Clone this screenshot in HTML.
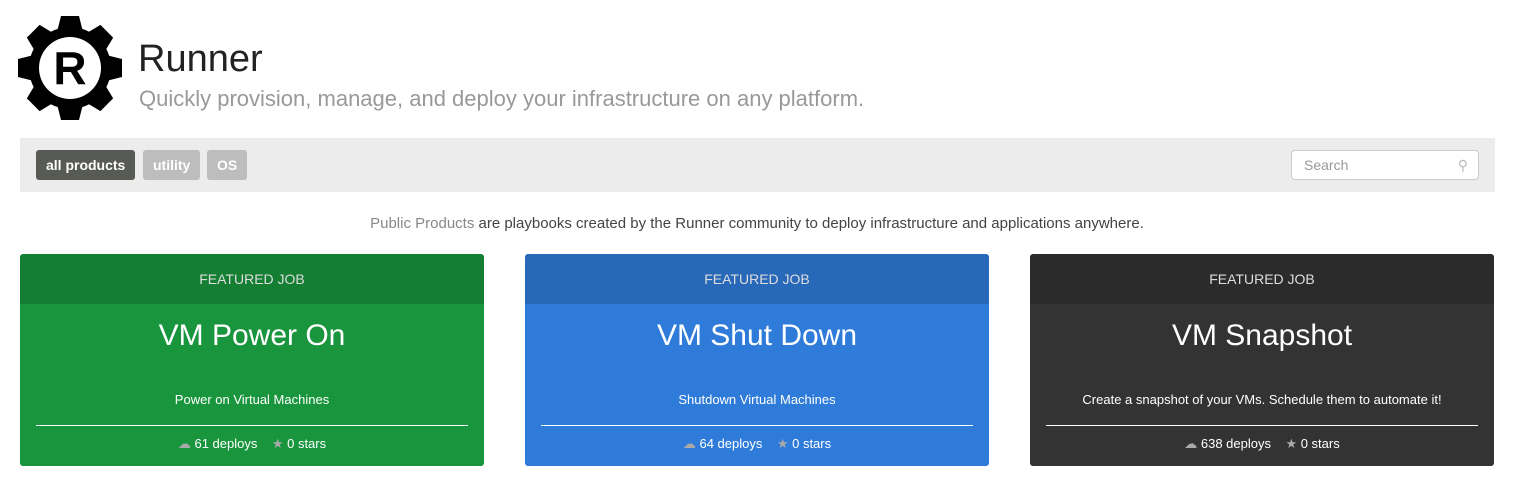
<!DOCTYPE html>
<html><head><style>
body{margin:0;background:#fff;font-family:"Liberation Sans",sans-serif;width:1514px;height:478px;position:relative;overflow:hidden}
.abs{position:absolute}
h1{position:absolute;left:138px;top:38px;margin:0;font-weight:normal;font-size:38px;color:#222}
.sub{left:139px;top:86px;font-size:22px;color:#999}
.bar{left:20px;top:138px;width:1475px;height:54px;background:#ececec}
.btn{position:absolute;top:12px;height:30px;line-height:30px;border-radius:3px;color:#fff;font-weight:bold;font-size:14px;padding:0 10px;background:#bdbdbd}
.search{position:absolute;left:1271px;top:12px;border:1px solid #ccc;border-radius:4px;background:#fff;font-size:14px;color:#999;line-height:28px;padding-left:12px;box-sizing:border-box;width:188px;height:30px}
.info{left:0;width:1514px;top:215px;text-align:center;font-size:15px;color:#444}
.card{position:absolute;top:254px;width:464px;height:212px;border-radius:3px;overflow:hidden;color:#fff;text-align:center}
.hd{height:50px;line-height:50px;font-size:14px;color:#ddd;background:rgba(0,0,0,.15)}
.t{position:absolute;top:65px;width:100%;font-size:30px}
.d{position:absolute;top:138px;width:100%;font-size:13px}
.ln{position:absolute;top:171px;left:16px;right:16px;border-top:1px solid #fff}
.f{position:absolute;top:182px;width:100%;font-size:13px}
.f span{color:#aaa}
</style></head><body>
<svg class="abs" style="left:18px;top:16px" width="104" height="104" viewBox="-52 -52 104 104">
<g fill="#000">
<circle r="41"/>
<g id="t"><path d="M-9,-52 L9,-52 L13,-36 L-13,-36 Z"/></g>
<use href="#t" transform="rotate(45)"/><use href="#t" transform="rotate(90)"/><use href="#t" transform="rotate(135)"/><use href="#t" transform="rotate(180)"/><use href="#t" transform="rotate(225)"/><use href="#t" transform="rotate(270)"/><use href="#t" transform="rotate(315)"/>
</g>
<circle r="31" fill="#fff"/>
<text x="0" y="16" text-anchor="middle" font-family="Liberation Sans" font-weight="bold" font-size="46">R</text>
</svg>
<h1>Runner</h1>
<div class="abs sub">Quickly provision, manage, and deploy your infrastructure on any platform.</div>
<div class="abs bar">
<div class="btn" style="left:16px;background:#575a55">all products</div>
<div class="btn" style="left:123px">utility</div>
<div class="btn" style="left:187px">OS</div>
<div class="search">Search<span style="position:absolute;right:10px;color:#bbb">&#9906;</span></div>
</div>
<div class="abs info"><span style="color:#888">Public Products</span> are playbooks created by the Runner community to deploy infrastructure and applications anywhere.</div>
<div class="card" style="left:20px;background:#18953d"><div class="hd">FEATURED JOB</div><div class="t">VM Power On</div><div class="d">Power on Virtual Machines</div><div class="ln"></div><div class="f"><span>☁</span> 61 deploys &nbsp;&nbsp; <span>★</span> 0 stars</div></div>
<div class="card" style="left:525px;background:#2f7bd9"><div class="hd">FEATURED JOB</div><div class="t">VM Shut Down</div><div class="d">Shutdown Virtual Machines</div><div class="ln"></div><div class="f"><span>☁</span> 64 deploys &nbsp;&nbsp; <span>★</span> 0 stars</div></div>
<div class="card" style="left:1030px;background:#333"><div class="hd">FEATURED JOB</div><div class="t">VM Snapshot</div><div class="d">Create a snapshot of your VMs. Schedule them to automate it!</div><div class="ln"></div><div class="f"><span>☁</span> 638 deploys &nbsp;&nbsp; <span>★</span> 0 stars</div></div>
</body></html>
